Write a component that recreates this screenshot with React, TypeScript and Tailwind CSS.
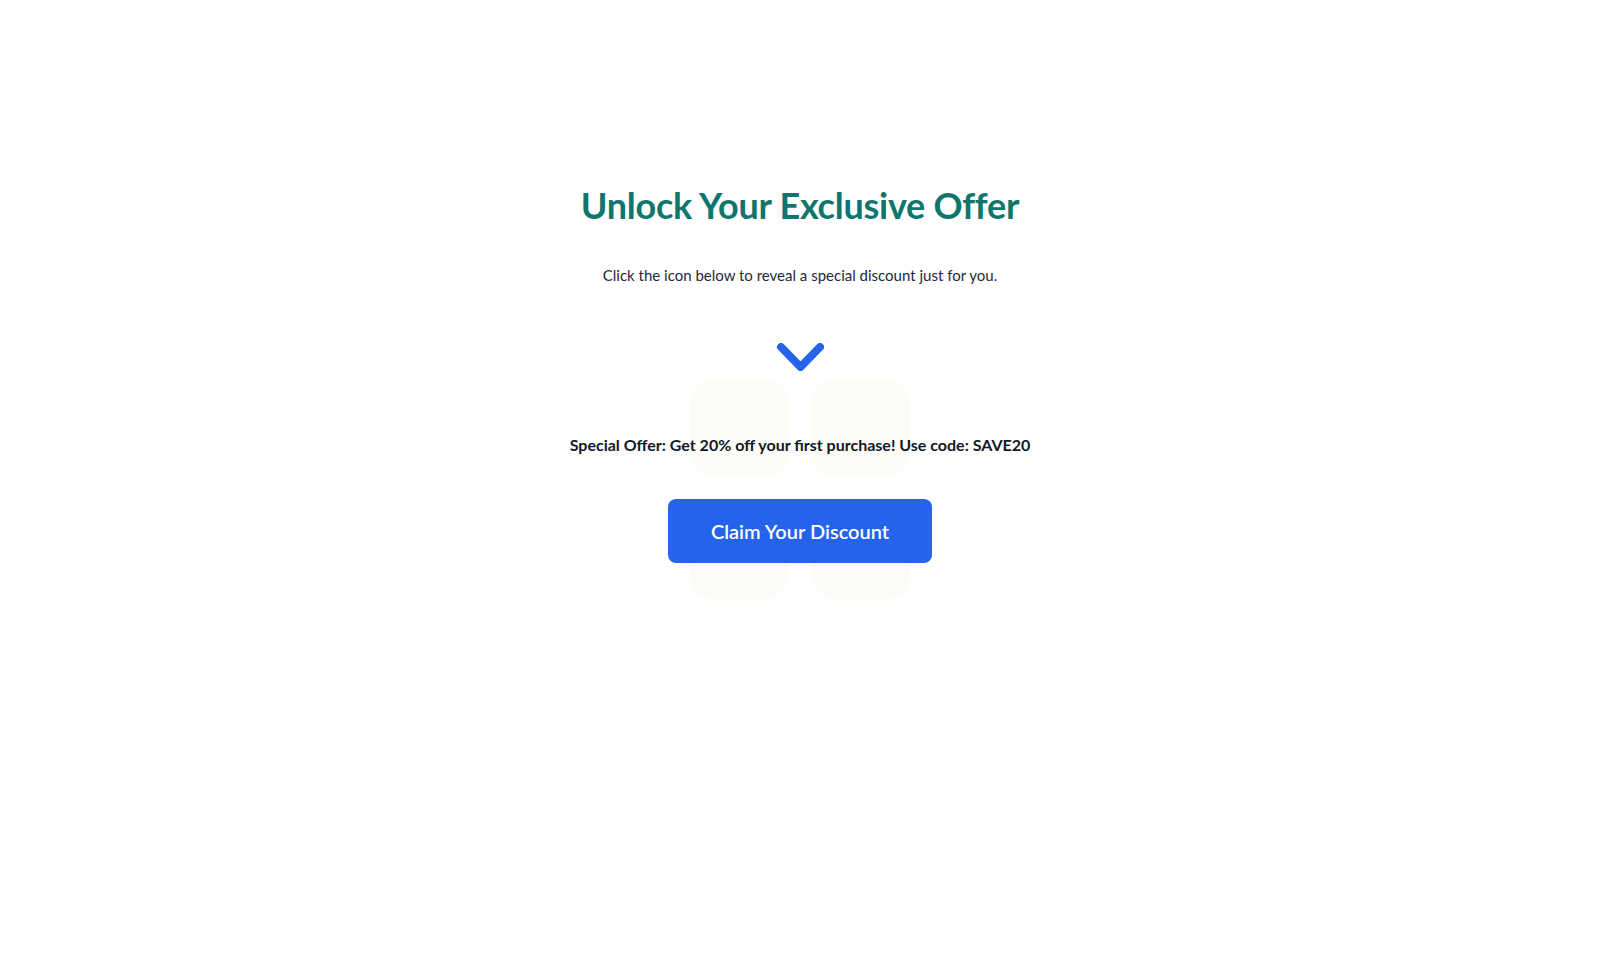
import { useState } from "react";

export default function App() {
  const [revealed, setRevealed] = useState(true);

  return (
    <div className="min-h-screen bg-white font-['Lato','Noto_Sans',sans-serif]">
      <main className="flex flex-col items-center pt-[185px]">
        <h1 className="text-4xl leading-10 font-bold tracking-[-0.25px] text-[#0f766e]">Unlock Your Exclusive Offer</h1>
        <p className="mt-[38px] text-[15px] leading-6 text-gray-800">
          Click the icon below to reveal a special discount just for you.
        </p>

        <button onClick={() => setRevealed(!revealed)} className="mt-[56px] block" aria-label="Reveal offer">
          <svg width="47" height="28" viewBox="0 0 47 28" fill="none">
            <polyline
              points="4,4 23.5,24 43,4"
              stroke="#2563eb"
              strokeWidth="8"
              strokeLinecap="round"
              strokeLinejoin="round"
            />
          </svg>
        </button>

        {/* offer card with the faint tile grid behind it */}
        <div className="relative mt-2 flex flex-col items-center">
          <div className="absolute left-1/2 top-0 grid -translate-x-1/2 grid-cols-2 gap-6">
            <div className="h-[98px] w-[98px] rounded-3xl bg-[#fdfcf6]" />
            <div className="h-[98px] w-[98px] rounded-3xl bg-[#fdfcf6]" />
            <div className="h-[98px] w-[98px] rounded-3xl bg-[#fdfcf6]" />
            <div className="h-[98px] w-[98px] rounded-3xl bg-[#fdfcf6]" />
          </div>
          {revealed && (
            <p className="relative pt-[54px] text-base leading-6 font-bold text-gray-900">
              Special Offer: Get 20% off your first purchase! Use code: SAVE20
            </p>
          )}
          <button className="relative mt-[42px] mb-[36px] h-[64px] w-[264px] rounded-lg bg-[#2563eb] text-xl font-semibold text-white">
            Claim Your Discount
          </button>
        </div>
      </main>
    </div>
  );
}
